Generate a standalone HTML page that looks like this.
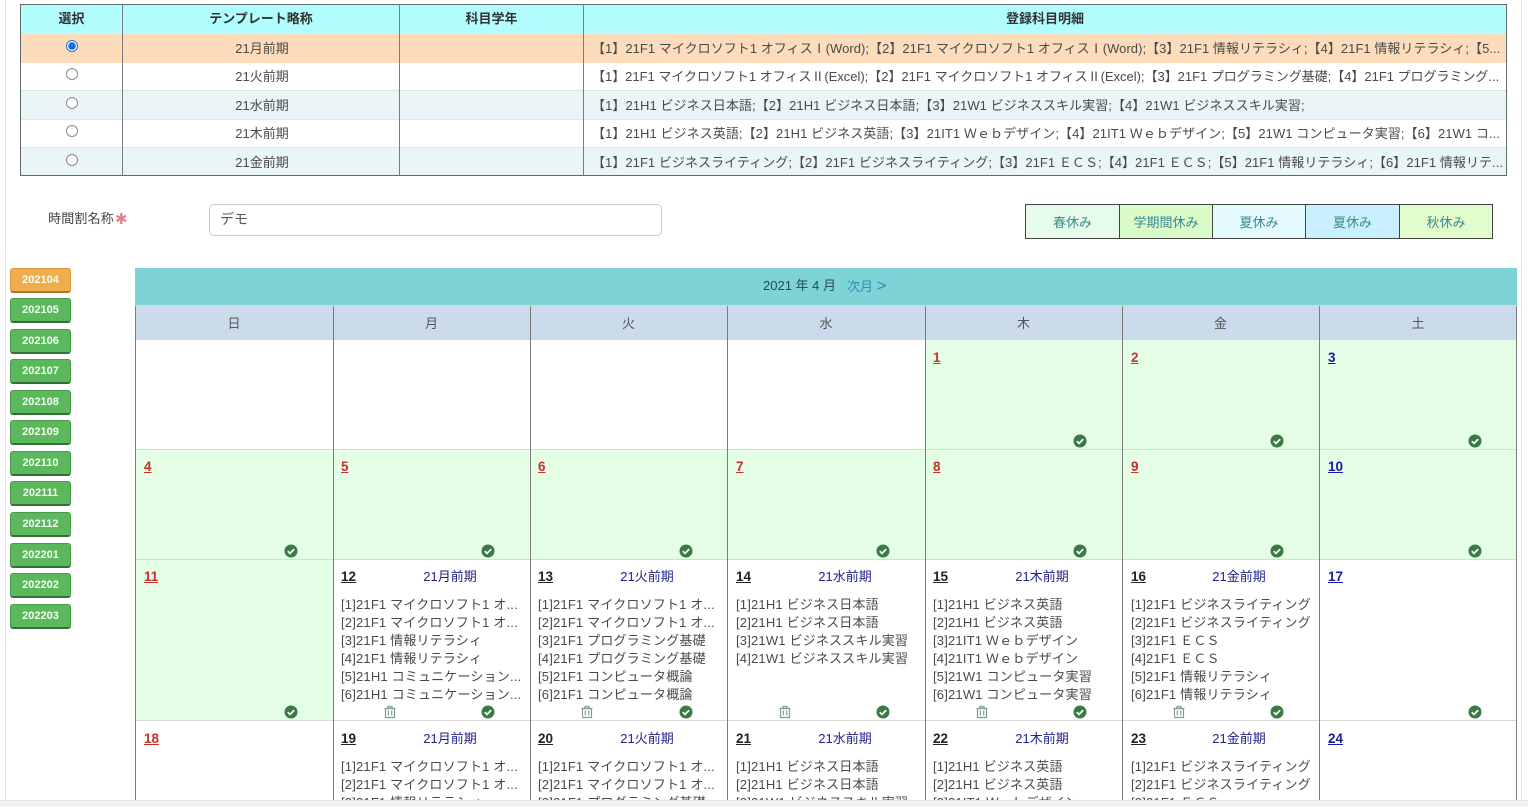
<!DOCTYPE html>
<html lang="ja"><head><meta charset="utf-8"><title>時間割</title>
<style>
html,body{margin:0;padding:0;background:#fff}
body{width:1528px;height:807px;overflow:hidden;position:relative;font-family:"DejaVu Sans","Noto Sans CJK JP",sans-serif;font-size:12px;color:#333}
div,span,a{position:absolute;white-space:nowrap;box-sizing:border-box}
#clip{left:0;top:0;width:1528px;height:800px;overflow:hidden}
.tc{text-align:center}
.h{font-family:"Liberation Sans","Noto Sans CJK JP",sans-serif;font-weight:bold;font-size:13px;color:#333;line-height:28px;top:5px;height:28px;text-align:center}
.r{left:21px;width:1485px}
.v{background:#7c7c7c;width:1px}
.n{font-family:"Liberation Sans","Noto Sans CJK JP",sans-serif;font-size:13px;line-height:16px;left:124px;width:276px;text-align:center;color:#4a4a4a}
.d{left:592px;width:914px;font-family:"Liberation Sans","Noto Sans CJK JP",sans-serif;font-size:13px;line-height:16px;color:#4a4a4a;overflow:hidden}
.rb{left:66px;width:12px;height:12px;border:1px solid #8a8a8a;border-radius:50%;background:#fff}
.hol{top:205px;height:33px;line-height:35px;text-align:center;font-family:"Liberation Sans","Noto Sans CJK JP",sans-serif;font-size:13px;color:#3b8a92}
.btn{left:10px;width:61px;height:25px;background:#5cb85c;border:1px solid #4a9a4a;border-bottom:2px solid #35703a;border-radius:3px;font:bold 11px/23px "Liberation Sans",sans-serif;text-align:center;color:#f2fff2}
.wd{top:305px;height:35px;background:#cbdbec;line-height:37px;text-align:center;color:#555;font-size:13px;font-family:"Liberation Sans","Noto Sans CJK JP",sans-serif}
.g{background:#e4fde5}
.hl{background:#d9d9d9;height:1px;left:136px;width:1381px}
.dt{font:bold 13.5px/16px "Liberation Sans",sans-serif;text-decoration:underline}
.re{color:#c9302c}.bl{color:#1a1aa8}.bk{color:#222}
.t{font-family:"Liberation Sans","Noto Sans CJK JP",sans-serif;font-size:13px;line-height:16px;color:#22228c;width:130px;text-align:center}
.c{font-family:"Liberation Sans","Noto Sans CJK JP",sans-serif;font-size:13px;line-height:18px;letter-spacing:.18px;color:#4a4a4a;width:186px;overflow:hidden}
svg{position:absolute}
</style></head><body>
<div id="clip">
<div style="left:5px;top:0;width:1px;height:800px;background:#e4e4e4"></div>
<div style="left:1521px;top:0;width:1px;height:800px;background:#e4e4e4"></div>

<!-- top table -->
<div style="left:20px;top:4px;width:1487px;height:172px;border:1px solid #5f6b6b"></div>
<div class="r" style="top:5px;height:29px;background:#b2fefe"></div>
<div class="r" style="top:34px;height:29px;background:#fcdcbb"></div>
<div class="r" style="top:63px;height:28px;background:#fff"></div>
<div class="r" style="top:91px;height:29px;background:#e9f5f6"></div>
<div class="r" style="top:120px;height:28px;background:#fff"></div>
<div class="r" style="top:148px;height:27px;background:#e9f5f6"></div>
<div class="r" style="top:90px;height:1px;background:#dfe5e5"></div>
<div class="r" style="top:119px;height:1px;background:#dfe5e5"></div>
<div class="r" style="top:147px;height:1px;background:#dfe5e5"></div>
<div class="v" style="left:122px;top:5px;height:171px"></div>
<div class="v" style="left:399px;top:5px;height:171px"></div>
<div class="v" style="left:583px;top:5px;height:171px"></div>
<div class="h" style="left:21px;width:101px">選択</div>
<div class="h" style="left:123px;width:276px">テンプレート略称</div>
<div class="h" style="left:400px;width:183px">科目学年</div>
<div class="h" style="left:584px;width:922px">登録科目明細</div>

<div class="rb" style="top:40px;border-color:#2a6fd0;background:radial-gradient(circle,#1a6ee0 0 3.5px,#fff 4px)"></div>
<div class="rb" style="top:68px"></div>
<div class="rb" style="top:97px"></div>
<div class="rb" style="top:125px"></div>
<div class="rb" style="top:154px"></div>
<div class="n" style="top:41px">21月前期</div>
<div class="n" style="top:69px">21火前期</div>
<div class="n" style="top:98px">21水前期</div>
<div class="n" style="top:126px">21木前期</div>
<div class="n" style="top:155px">21金前期</div>
<div class="d" style="top:41px;letter-spacing:.04px">【1】21F1 マイクロソフト1 オフィスⅠ(Word);【2】21F1 マイクロソフト1 オフィスⅠ(Word);【3】21F1 情報リテラシィ;【4】21F1 情報リテラシィ;【5...</div>
<div class="d" style="top:69px;letter-spacing:-.02px">【1】21F1 マイクロソフト1 オフィスⅡ(Excel);【2】21F1 マイクロソフト1 オフィスⅡ(Excel);【3】21F1 プログラミング基礎;【4】21F1 プログラミング...</div>
<div class="d" style="top:98px;letter-spacing:.07px">【1】21H1 ビジネス日本語;【2】21H1 ビジネス日本語;【3】21W1 ビジネススキル実習;【4】21W1 ビジネススキル実習;</div>
<div class="d" style="top:126px;letter-spacing:.07px">【1】21H1 ビジネス英語;【2】21H1 ビジネス英語;【3】21IT1 Ｗｅｂデザイン;【4】21IT1 Ｗｅｂデザイン;【5】21W1 コンピュータ実習;【6】21W1 コ...</div>
<div class="d" style="top:155px;letter-spacing:.05px">【1】21F1 ビジネスライティング;【2】21F1 ビジネスライティング;【3】21F1 ＥＣＳ;【4】21F1 ＥＣＳ;【5】21F1 情報リテラシィ;【6】21F1 情報リテ...</div>

<!-- form -->
<div style="left:48px;top:210px;font:13px/17px 'Liberation Sans','Noto Sans CJK JP',sans-serif;letter-spacing:.2px;color:#444">時間割名称</div>
<div style="left:115px;top:209px;font:bold 15px/20px 'DejaVu Sans',sans-serif;color:#e8808a">✱</div>
<div style="left:209px;top:204px;width:453px;height:32px;border:1px solid #ccc;border-radius:5px;background:#fff;font:14px/29px 'Liberation Sans','Noto Sans CJK JP',sans-serif;padding-left:10px;color:#555">デモ</div>

<div style="left:1025px;top:204px;width:468px;height:35px;border:1px solid #444"></div>
<div class="hol" style="left:1026px;width:93px;background:#e6fbe9">春休み</div>
<div class="hol" style="left:1120px;width:92px;background:#d9fbc8">学期間休み</div>
<div class="hol" style="left:1213px;width:92px;background:#e4faff">夏休み</div>
<div class="hol" style="left:1306px;width:93px;background:#c9f0fd">夏休み</div>
<div class="hol" style="left:1400px;width:92px;background:#e2fccc">秋休み</div>
<div class="v" style="left:1119px;top:205px;height:33px;background:#444"></div>
<div class="v" style="left:1212px;top:205px;height:33px;background:#444"></div>
<div class="v" style="left:1305px;top:205px;height:33px;background:#444"></div>
<div class="v" style="left:1399px;top:205px;height:33px;background:#444"></div>

<!-- month buttons -->
<div class="btn" style="top:268px;background:#f0ad4e;border-color:#d99a3f #d99a3f #a9793a">202104</div>
<div class="btn" style="top:298px">202105</div>
<div class="btn" style="top:329px">202106</div>
<div class="btn" style="top:359px">202107</div>
<div class="btn" style="top:390px">202108</div>
<div class="btn" style="top:420px">202109</div>
<div class="btn" style="top:451px">202110</div>
<div class="btn" style="top:481px">202111</div>
<div class="btn" style="top:512px">202112</div>
<div class="btn" style="top:543px">202201</div>
<div class="btn" style="top:573px">202202</div>
<div class="btn" style="top:604px">202203</div>

<!-- calendar -->
<div style="left:135px;top:268px;width:1382px;height:37px;background:#7dd3d6"></div>
<div style="left:763px;top:277px;font:13px/17px 'Liberation Sans','Noto Sans CJK JP',sans-serif;color:#2c4a50">2021 年 4 月</div>
<div style="left:847px;top:277px;font:13px/17px 'Liberation Sans','Noto Sans CJK JP',sans-serif;color:#2f8fb0">次月 <i style="font-style:normal;font-size:17px;font-weight:100;line-height:17px">&gt;</i></div>
<div class="wd" style="left:135px;width:198px">日</div>
<div class="wd" style="left:333px;width:197px">月</div>
<div class="wd" style="left:530px;width:197px">火</div>
<div class="wd" style="left:727px;width:198px">水</div>
<div class="wd" style="left:925px;width:197px">木</div>
<div class="wd" style="left:1122px;width:197px">金</div>
<div class="wd" style="left:1319px;width:198px">土</div>

<div class="g" style="left:925px;top:340px;width:592px;height:110px"></div>
<div class="g" style="left:135px;top:450px;width:1382px;height:110px"></div>
<div class="g" style="left:135px;top:560px;width:198px;height:161px"></div>

<div class="hl" style="top:449px"></div>
<div class="hl" style="top:559px"></div>
<div class="hl" style="top:720px"></div>

<div class="v" style="left:135px;top:306px;height:494px"></div>
<div class="v" style="left:333px;top:306px;height:494px"></div>
<div class="v" style="left:530px;top:306px;height:494px"></div>
<div class="v" style="left:727px;top:306px;height:494px"></div>
<div class="v" style="left:925px;top:306px;height:494px"></div>
<div class="v" style="left:1122px;top:306px;height:494px"></div>
<div class="v" style="left:1319px;top:306px;height:494px"></div>
<div class="v" style="left:1516px;top:306px;height:494px"></div>

<!-- dates -->
<a class="dt re" style="left:933px;top:350px">1</a><a class="dt re" style="left:1131px;top:350px">2</a><a class="dt bl" style="left:1328px;top:350px">3</a>
<a class="dt re" style="left:144px;top:459px">4</a><a class="dt re" style="left:341px;top:459px">5</a><a class="dt re" style="left:538px;top:459px">6</a><a class="dt re" style="left:736px;top:459px">7</a><a class="dt re" style="left:933px;top:459px">8</a><a class="dt re" style="left:1131px;top:459px">9</a><a class="dt bl" style="left:1328px;top:459px">10</a>
<a class="dt re" style="left:144px;top:569px">11</a><a class="dt bk" style="left:341px;top:569px">12</a><a class="dt bk" style="left:538px;top:569px">13</a><a class="dt bk" style="left:736px;top:569px">14</a><a class="dt bk" style="left:933px;top:569px">15</a><a class="dt bk" style="left:1131px;top:569px">16</a><a class="dt bl" style="left:1328px;top:569px">17</a>
<a class="dt re" style="left:144px;top:731px">18</a><a class="dt bk" style="left:341px;top:731px">19</a><a class="dt bk" style="left:538px;top:731px">20</a><a class="dt bk" style="left:736px;top:731px">21</a><a class="dt bk" style="left:933px;top:731px">22</a><a class="dt bk" style="left:1131px;top:731px">23</a><a class="dt bl" style="left:1328px;top:731px">24</a>

<!-- templates -->
<span class="t" style="left:385px;top:569px">21月前期</span><span class="t" style="left:582px;top:569px">21火前期</span><span class="t" style="left:780px;top:569px">21水前期</span><span class="t" style="left:977px;top:569px">21木前期</span><span class="t" style="left:1174px;top:569px">21金前期</span>
<span class="t" style="left:385px;top:731px">21月前期</span><span class="t" style="left:582px;top:731px">21火前期</span><span class="t" style="left:780px;top:731px">21水前期</span><span class="t" style="left:977px;top:731px">21木前期</span><span class="t" style="left:1174px;top:731px">21金前期</span>

<!-- contents wk3 -->
<div class="c" style="left:341px;top:596px">[1]21F1 マイクロソフト1 オ...<br>[2]21F1 マイクロソフト1 オ...<br>[3]21F1 情報リテラシィ<br>[4]21F1 情報リテラシィ<br>[5]21H1 コミュニケーション...<br>[6]21H1 コミュニケーション...</div>
<div class="c" style="left:538px;top:596px">[1]21F1 マイクロソフト1 オ...<br>[2]21F1 マイクロソフト1 オ...<br>[3]21F1 プログラミング基礎<br>[4]21F1 プログラミング基礎<br>[5]21F1 コンピュータ概論<br>[6]21F1 コンピュータ概論</div>
<div class="c" style="left:736px;top:596px">[1]21H1 ビジネス日本語<br>[2]21H1 ビジネス日本語<br>[3]21W1 ビジネススキル実習<br>[4]21W1 ビジネススキル実習</div>
<div class="c" style="left:933px;top:596px">[1]21H1 ビジネス英語<br>[2]21H1 ビジネス英語<br>[3]21IT1 Ｗｅｂデザイン<br>[4]21IT1 Ｗｅｂデザイン<br>[5]21W1 コンピュータ実習<br>[6]21W1 コンピュータ実習</div>
<div class="c" style="left:1131px;top:596px">[1]21F1 ビジネスライティング<br>[2]21F1 ビジネスライティング<br>[3]21F1 ＥＣＳ<br>[4]21F1 ＥＣＳ<br>[5]21F1 情報リテラシィ<br>[6]21F1 情報リテラシィ</div>
<!-- contents wk4 -->
<div class="c" style="left:341px;top:758px">[1]21F1 マイクロソフト1 オ...<br>[2]21F1 マイクロソフト1 オ...<br>[3]21F1 情報リテラシィ</div>
<div class="c" style="left:538px;top:758px">[1]21F1 マイクロソフト1 オ...<br>[2]21F1 マイクロソフト1 オ...<br>[3]21F1 プログラミング基礎</div>
<div class="c" style="left:736px;top:758px">[1]21H1 ビジネス日本語<br>[2]21H1 ビジネス日本語<br>[3]21W1 ビジネススキル実習</div>
<div class="c" style="left:933px;top:758px">[1]21H1 ビジネス英語<br>[2]21H1 ビジネス英語<br>[3]21IT1 Ｗｅｂデザイン</div>
<div class="c" style="left:1131px;top:758px">[1]21F1 ビジネスライティング<br>[2]21F1 ビジネスライティング<br>[3]21F1 ＥＣＳ</div>

<!-- icons -->
<svg style="left:0;top:0" width="1528" height="800" viewBox="0 0 1528 800">
<defs>
<g id="k"><circle r="6.5" fill="#3a7a45"/><path d="M-3.2 0.2L-1 2.4L3.2-1.8" fill="none" stroke="#fff" stroke-width="1.7"/></g>
<g id="b" fill="none" stroke="#7f9f8c" stroke-width="1.2"><path d="M-4.5-3.5H4.5V5.5H-4.5Z"/><path d="M-5.5-3.5H5.5M-2-3.5V-5.5H2V-3.5M-1.7-1.5V3.5M1.7-1.5V3.5"/></g>
</defs>
<use href="#k" x="1080" y="441"/><use href="#k" x="1277" y="441"/><use href="#k" x="1475" y="441"/>
<use href="#k" x="291" y="551"/><use href="#k" x="488" y="551"/><use href="#k" x="686" y="551"/><use href="#k" x="883" y="551"/><use href="#k" x="1080" y="551"/><use href="#k" x="1277" y="551"/><use href="#k" x="1475" y="551"/>
<use href="#k" x="291" y="712"/><use href="#k" x="488" y="712"/><use href="#k" x="686" y="712"/><use href="#k" x="883" y="712"/><use href="#k" x="1080" y="712"/><use href="#k" x="1277" y="712"/><use href="#k" x="1475" y="712"/>
<use href="#b" x="390" y="712"/><use href="#b" x="587" y="712"/><use href="#b" x="785" y="712"/><use href="#b" x="982" y="712"/><use href="#b" x="1179" y="712"/>
</svg>
</div>
<div style="left:0;top:800px;width:1528px;height:7px;background:#f1f1f1;border-top:1px solid #e6e6e6"></div>
</body></html>
